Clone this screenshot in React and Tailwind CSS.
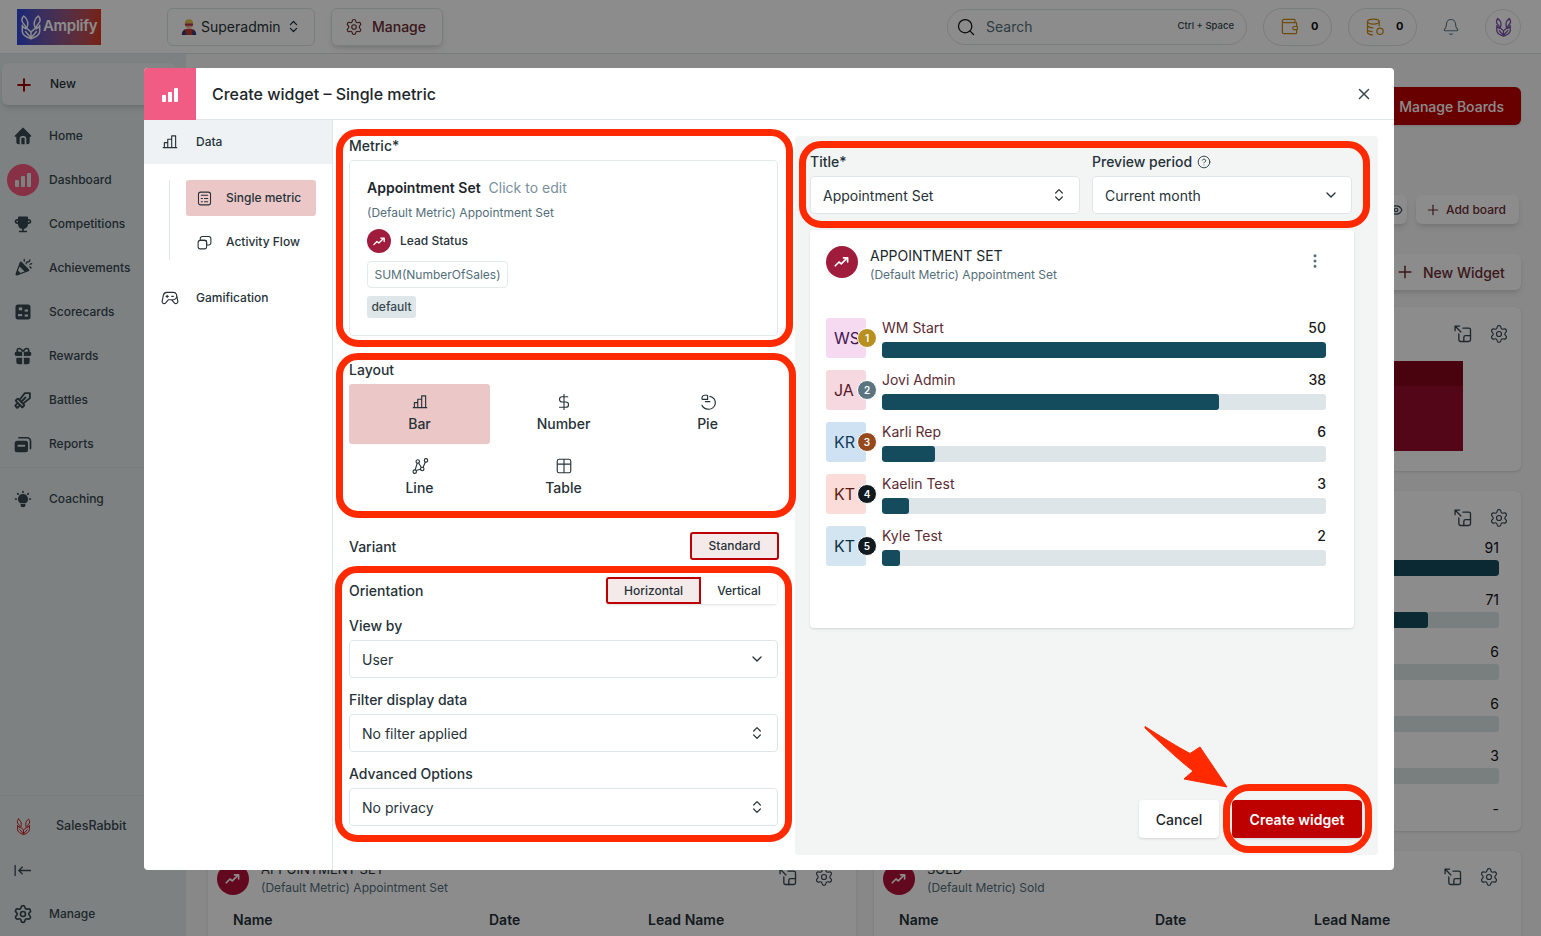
import React from "react";
import { Bell, Search, X, ChevronDown, ChevronsUpDown, Plus, DollarSign, Eye, EllipsisVertical, CircleHelp, Settings, Wallet } from "lucide-react";
import { TbHomeFilled, TbTrophyFilled, TbGiftFilled, TbBulbFilled, TbChevronsRight } from "react-icons/tb";
import { PiConfettiFill, PiChartBar, PiGameController, PiSwordBold } from "react-icons/pi";

const Rabbit = ({ className, stroke = "currentColor", w = 1.6 }) => (
  <svg viewBox="0 0 24 28" fill="none" stroke={stroke} strokeWidth={w} strokeLinejoin="round" strokeLinecap="round" className={className}>
    <path d="M4 2c-2.5 3-2.5 6 0 8.500 1.500 1.500 2.500 3 2.500 5.500-2-.5-3.500-2-4-4v7c0 3.500 4 6 9.500 8 5.500-2 9.500-4.500 9.500-8v-7c-.5 2-2 3.500-4 4 0-2.500 1-4 2.500-5.500 2.500-2.500 2.500-5.500 0-8.500-2.500 2-4.500 5-4.500 8.500 0 2 1 3 1 5l-4.500 4-4.500-4c0-2 1-3 1-5C8.500 7 6.500 4 4 2z" />
    <path d="M12 20v6M6 19l6 7 6-7" />
  </svg>
);

const Trend = ({ className }) => (
  <svg viewBox="0 0 24 24" fill="none" stroke="white" strokeWidth="2.2" strokeLinecap="round" strokeLinejoin="round" className={className}>
    <path d="M3 17l5-5 3 2.500 7-7" />
    <path d="M14 6.500h5.500V12" />
  </svg>
);

const Expand = ({ className }) => (
  <svg viewBox="0 0 24 24" fill="none" stroke="currentColor" strokeWidth="1.6" strokeLinecap="round" strokeLinejoin="round" className={className}>
    <path d="M2.500 2.500l7 7M2.500 2.500v5.500M2.500 2.500h5.500" />
    <path d="M12 5h7a2 2 0 012 2v12a2 2 0 01-2 2H9a2 2 0 01-2-2v-7" />
    <path d="M13 21v-5a2 2 0 012-2h6" />
  </svg>
);

const Scorecard = ({ className }) => (
  <svg viewBox="0 0 24 24" className={className}>
    <rect x="3" y="3" width="18" height="18" rx="3" fill="currentColor" />
    <rect x="7" y="6.500" width="4" height="3.500" fill="#e4ebed" />
    <rect x="14" y="9" width="4" height="2.500" fill="#e4ebed" />
    <rect x="6" y="14.500" width="5" height="2.500" fill="#e4ebed" />
    <rect x="14" y="15" width="4" height="2.500" fill="#e4ebed" />
  </svg>
);

const ReportsIcon = ({ className }) => (
  <svg viewBox="0 0 24 24" fill="none" className={className}>
    <rect x="2" y="8" width="16" height="14" rx="3" fill="currentColor" />
    <rect x="5.500" y="13" width="9" height="2.200" fill="#e4ebed" />
    <path d="M7 4.500h10a4 4 0 014 4v9" stroke="currentColor" strokeWidth="2" strokeLinecap="round" />
  </svg>
);

const SingleIcon = ({ className }) => (
  <svg viewBox="0 0 24 24" fill="none" stroke="currentColor" strokeWidth="1.5" strokeLinecap="round" className={className}>
    <rect x="3.500" y="3" width="17" height="18" rx="3" />
    <path d="M7.500 7.500h9M7.500 12h1.500M12 12h4.500M7.500 16.500h1.500M12 16.500h4.500" />
  </svg>
);

const FlowIcon = ({ className }) => (
  <svg viewBox="0 0 24 24" fill="none" stroke="currentColor" strokeWidth="1.5" strokeLinejoin="round" className={className}>
    <path d="M9 3.500h9a3 3 0 013 3v6a3 3 0 01-3 3h-3V11a2 2 0 00-2-2H6V6.500a3 3 0 013-3z" />
    <rect x="3" y="9" width="12" height="12" rx="3" />
  </svg>
);

const PieIcon = ({ className }) => (
  <svg viewBox="0 0 24 24" fill="none" stroke="currentColor" strokeWidth="1.5" strokeLinejoin="round" strokeLinecap="round" className={className}>
    <path d="M8 3h2.500a1 1 0 011 1v4.500H5a1 1 0 01-1-1V6.500A3.500 3.500 0 018 3z" />
    <path d="M14.500 4.500A8.500 8.500 0 0112 21.500c-3.500 0-6.500-2-8-5M14.500 11.500H8.500v0" />
  </svg>
);

const LineIcon = ({ className }) => (
  <svg viewBox="0 0 24 24" fill="none" stroke="currentColor" strokeWidth="1.5" className={className}>
    <circle cx="5" cy="19.500" r="2.300" />
    <circle cx="9" cy="6" r="2.300" />
    <circle cx="15" cy="16" r="2.300" />
    <circle cx="20" cy="4.500" r="2.300" />
    <path d="M5.500 17.200L8.400 8.200M10.200 8l3.600 6M16 14l3.200-7.300" />
    <path d="M7 18l6.500-2" />
  </svg>
);

const TableIcon = ({ className }) => (
  <svg viewBox="0 0 24 24" fill="none" stroke="currentColor" strokeWidth="1.5" className={className}>
    <rect x="3" y="3" width="18" height="18" rx="2.500" />
    <path d="M3 9.500h18M12 3v18" />
  </svg>
);

const Coins = ({ className }) => (
  <svg viewBox="0 0 24 24" fill="none" stroke="currentColor" strokeWidth="1.5" className={className}>
    <ellipse cx="10" cy="5.500" rx="7" ry="3" />
    <path d="M3 5.500v13c0 1.500 3 3 6.500 3M17 5.500V11M3 10c0 1.500 3 3 7 3M3 15c0 1.500 3 2.500 6 2.500" />
    <circle cx="18" cy="17" r="3.800" />
  </svg>
);

const Hero = () => (
  <svg viewBox="0 0 20 20" className="w-[18px] h-[18px]">
    <path d="M2 19c0-5 3.500-7 8-7s8 2 8 7z" fill="#c0392b" />
    <path d="M2 19c0-3 1.500-5.500 3.500-6.500L7 19zM18 19c0-3-1.500-5.500-3.500-6.500L13 19z" fill="#2f3b7d" />
    <circle cx="10" cy="7" r="4.500" fill="#e8b98d" />
    <path d="M5.300 7c0-4 2-5.500 4.700-5.500S14.700 3 14.700 7c-1.500-2-7.900-2-9.400 0z" fill="#e5c14a" />
    <rect x="5.500" y="6" width="9" height="2.500" rx="1" fill="#b8324a" />
  </svg>
);

const RED = "border-[#ff2a00]";

const navItems = [
  ["Home", TbHomeFilled],
  ["Dashboard", null],
  ["Competitions", TbTrophyFilled],
  ["Achievements", PiConfettiFill],
  ["Scorecards", Scorecard],
  ["Rewards", TbGiftFilled],
  ["Battles", PiSwordBold],
  ["Reports", ReportsIcon],
];

function SideItem({ label, Icon }) {
  return (
    <div className="h-[44px] flex items-center text-[12px] font-medium text-[#37474f]">
      <div className="w-[49px] flex justify-center pl-[-3px] shrink-0">
        {Icon ? (
          <Icon className="w-[20px] h-[20px] mr-[3px] text-[#37474f]" />
        ) : (
          <div className="w-[32px] h-[32px] rounded-full bg-[#f8587f] flex items-end justify-center gap-[2px] pb-[9px] mr-[3px]">
            <span className="w-[4px] h-[7px] bg-[#e4ebed] rounded-[1px]" />
            <span className="w-[4px] h-[11px] bg-[#e4ebed] rounded-[1px]" />
            <span className="w-[4px] h-[14px] bg-[#e4ebed] rounded-[1px]" />
          </div>
        )}
      </div>
      <span>{label}</span>
    </div>
  );
}

function Header() {
  return (
    <header className="h-[54px] bg-white border-b border-[#dbe3e6] flex items-center pl-[17px] pr-[20px] shrink-0">
      <div className="w-[84px] h-[36px] bg-gradient-to-r from-[#2f46d8] to-[#d83a20] flex items-center pl-[3px] gap-[1px]">
        <Rabbit className="w-[22px] h-[28px] text-white" />
        <span className="text-[15px] font-semibold text-white tracking-[-0.3px]">Amplify</span>
      </div>
      <button className="ml-[66px] w-[148px] h-[38px] border border-[#dbe3e6] rounded-md flex items-center pl-[12px] gap-[3px] text-[14px] text-[#263238]">
        <Hero />
        <span>Superadmin</span>
        <ChevronsUpDown className="w-[15px] h-[15px] ml-[2px]" />
      </button>
      <button className="ml-[16px] w-[112px] h-[38px] border border-[#dbe3e6] rounded-md flex items-center pl-[13px] gap-[9px] text-[14px] font-medium text-[#6b2c33] shadow-md">
        <Settings className="w-[18px] h-[18px]" strokeWidth={1.5} />
        <span>Manage</span>
      </button>
      <div className="ml-auto w-[300px] h-[36px] border border-[#dbe3e6] rounded-full flex items-center pl-[8px] pr-[12px] text-[#546e7a]">
        <Search className="w-[20px] h-[20px] text-[#111]" strokeWidth={1.5} />
        <span className="ml-[10px] text-[14px]">Search</span>
        <span className="ml-auto text-[9.500px] font-medium text-[#37474f]">Ctrl + Space</span>
      </div>
      <div className="ml-[16px] w-[69px] h-[38px] border border-[#dbe3e6] rounded-full flex items-center pl-[16px] gap-[12px]">
        <Wallet className="w-[19px] h-[19px] text-[#c98a1a]" strokeWidth={1.5} />
        <span className="text-[11px] font-bold text-[#111]">0</span>
      </div>
      <div className="ml-[16px] w-[69px] h-[38px] border border-[#dbe3e6] rounded-full flex items-center pl-[16px] gap-[11px]">
        <Coins className="w-[20px] h-[20px] text-[#c98a1a]" />
        <span className="text-[11px] font-bold text-[#111]">0</span>
      </div>
      <Bell className="ml-[25px] w-[18px] h-[18px] text-[#607d8b]" strokeWidth={1.5} />
      <div className="ml-[25px] w-[36px] h-[36px] border border-[#dbe3e6] rounded-full flex items-center justify-center">
        <Rabbit className="w-[17px] h-[22px]" stroke="#7a4fa8" w={1.8} />
      </div>
    </header>
  );
}

function Sidebar() {
  return (
    <aside className="w-[185px] bg-[#e4ebed] flex flex-col shrink-0">
      <div className="pt-[9px] pl-[2px] pr-[9px]">
        <button className="w-full h-[42px] bg-[#eef2f4] rounded-md shadow-md flex items-center text-[12px] font-medium text-[#263238]">
          <span className="relative w-[44px] h-[18px] block">
            <Plus className="absolute left-[12px] top-0 w-[20px] h-[20px] text-[#a00000]" strokeWidth={2.4} />
          </span>
          <span className="ml-[4px]">New</span>
        </button>
      </div>
      <nav className="mt-[9px] border-b border-[#dbe3e6] pb-[1px]">
        {navItems.map(([l, I]) => (
          <SideItem key={l} label={l} Icon={I} />
        ))}
      </nav>
      <div className="mt-[9px]">
        <SideItem label="Coaching" Icon={TbBulbFilled} />
      </div>
      <div className="mt-auto border-t border-[#dbe3e6] pt-[8px] pb-[0px]">
        <div className="h-[44px] flex items-center text-[12.500px] font-medium text-[#37474f]">
          <div className="w-[56px] flex justify-center pr-[10px]">
            <Rabbit className="w-[15px] h-[19px]" stroke="#c81e1e" w={1.6} />
          </div>
          <span>SalesRabbit</span>
        </div>
        <div className="h-[44px] flex items-center pl-[14px] text-[#37474f] text-[16px]">
          <svg viewBox="0 0 20 14" className="w-[19px] h-[13px]" fill="none" stroke="currentColor" strokeWidth="1.400">
            <path d="M1 1v12M18 7H5M9 3L5 7l4 4" />
          </svg>
        </div>
        <SideItem label="Manage" Icon={Settings} />
      </div>
    </aside>
  );
}

function CardIcons() {
  return (
    <div className="flex items-center gap-[16px] text-[#37474f]">
      <Expand className="w-[20px] h-[20px]" />
      <Settings className="w-[20px] h-[20px]" strokeWidth={1.4} />
    </div>
  );
}

function BottomCard({ names }) {
  return (
    <div className="bg-white rounded-md shadow h-[110px] pl-[9px] pr-[22px] pt-[12px]">
      <div className="flex">
        <div className="w-[32px] h-[32px] rounded-full bg-[#b5123a] flex items-center justify-center">
          <Trend className="w-[18px] h-[18px]" />
        </div>
        <div className="ml-[12px] flex-1 text-[12px] leading-[18px]">
          <div className="text-[13px] text-[#263238] -mt-[3px]">{names[3]}</div>
          <div className="text-[#546e7a] mt-[1px]">(Default Metric) {names[4]}</div>
        </div>
        <div className="mt-[4px]"><CardIcons /></div>
      </div>
      <div className="relative h-[20px] mt-[12px] text-[14px] font-semibold text-[#263238] flex pl-[16px]">
        <span className="w-[256px]">{names[0]}</span>
        <span className="w-[159px]">{names[1]}</span>
        <span>{names[2]}</span>
      </div>
    </div>
  );
}

function Background() {
  const vals = [["91", 100, "bg-[#144c5e]"], ["71", 78, "bg-[#144c5e]"], ["6", 0, ""], ["6", 0, ""], ["3", 0, ""]];
  return (
    <main className="flex-1 min-w-0 border-l border-[#e4ebed] bg-[#f7f7f7] pl-[22px] pr-[20px] flex flex-col">
      <div className="flex justify-end mt-[33px]">
        <button className="w-[150px] h-[38px] bg-[#bd0000] rounded-md text-[14px] font-medium text-white shadow text-right pr-[17px]">Manage Boards</button>
      </div>
      <div className="flex justify-end gap-[9px] mt-[70px] pr-[2px]">
        <button className="w-[40px] h-[29px] bg-white rounded-md shadow-md flex items-center justify-end pr-[4px] text-[#37474f]"><Eye className="w-[14px] h-[14px]" /></button>
        <button className="w-[103px] h-[29px] bg-white rounded-md shadow-md flex items-center pl-[9px] gap-[5px] text-[12px] font-medium text-[#6b2c33]">
          <Plus className="w-[16px] h-[16px]" strokeWidth={1.8} />Add board
        </button>
      </div>
      <div className="flex justify-end mt-[30px]">
        <button className="w-[140px] h-[36px] bg-white rounded-md shadow-md flex items-center pl-[14px] gap-[8px] text-[14px] font-medium text-[#6b2c33]">
          <Plus className="w-[20px] h-[20px]" strokeWidth={1.8} />New Widget
        </button>
      </div>
      <div className="grid grid-cols-[648px_647px] gap-x-[18px] gap-y-[20px] mt-[17px]">
        <div className="h-[164px] bg-white rounded-md shadow" />
        <div className="h-[164px] bg-white rounded-md shadow pr-[12px]">
          <div className="flex justify-end pt-[17px]"><CardIcons /></div>
          <div className="mt-[17px] ml-[240px] mr-[46px] h-[90px] bg-[#990b2f]">
            <div className="h-[25px] bg-[#83071d]" />
          </div>
        </div>
        <div className="h-[340px] bg-white rounded-md shadow" />
        <div className="h-[340px] bg-white rounded-md shadow pr-[12px]">
          <div className="flex justify-end pt-[17px]"><CardIcons /></div>
          <div className="mt-[10px] ml-[300px] mr-[10px]">
            {vals.map(([v, w, c], i) => (
              <div key={i} className="h-[52px] pt-[0px]">
                <div className="h-[20px] text-right text-[14px] text-[#111] leading-[20px]">{v}</div>
                <div className="h-[16px] mt-[2px] bg-[#dde5e8] rounded-[3px] overflow-hidden">
                  {w > 0 && <div className={`h-full ${c} rounded-[3px]`} style={{ width: w + "%" }} />}
                </div>
              </div>
            ))}
            <div className="text-right text-[14px] text-[#111]">-</div>
          </div>
        </div>
        <BottomCard names={["Name", "Date", "Lead Name", "APPOINTMENT SET", "Appointment Set"]} />
        <BottomCard names={["Name", "Date", "Lead Name", "SOLD", "Sold"]} />
      </div>
    </main>
  );
}

function Select({ value, kind, className = "" }) {
  return (
    <div className={`h-[38px] bg-white border border-[#dfe6e9] rounded-[4px] flex items-center pl-[12px] pr-[12px] text-[14px] text-[#263238] ${className}`}>
      <span>{value}</span>
      {kind === "down" ? (
        <ChevronDown className="ml-auto w-[16px] h-[16px] text-[#263238]" strokeWidth={2} />
      ) : (
        <ChevronsUpDown className="ml-auto w-[16px] h-[16px] text-[#263238]" strokeWidth={1.8} />
      )}
    </div>
  );
}

function LayoutCell({ icon, label, active }) {
  return (
    <div className={`h-[60px] rounded-[3px] flex flex-col items-center pt-[9px] text-[14px] font-medium text-[#263238] ${active ? "bg-[#ebc7c7]" : ""}`}>
      {icon}
      <span className="mt-[3px] leading-[20px]">{label}</span>
    </div>
  );
}

function Row({ initials, avatar, text, rank, badge, name, value, pct }) {
  return (
    <div className="flex gap-[16px] h-[40px]">
      <div className={`relative w-[40px] h-[40px] rounded-[3px] ${avatar} ${text} flex items-center pl-[8px] text-[16px]`}>
        {initials}
        <span className={`absolute left-[31px] top-[10px] w-[20px] h-[20px] rounded-full border border-white ${badge} text-white text-[10px] font-semibold flex items-center justify-center`}>{rank}</span>
      </div>
      <div className="w-[444px]">
        <div className="h-[24px] flex justify-between text-[14px] leading-[20px]">
          <span className="text-[#5c2b33]">{name}</span>
          <span className="text-[#1a1a1a] font-medium">{value}</span>
        </div>
        <div className="h-[16px] bg-[#dde5e8] rounded-[3px] overflow-hidden">
          <div className="h-full bg-[#144c5e] rounded-[3px]" style={{ width: pct + "%" }} />
        </div>
      </div>
    </div>
  );
}

function Modal() {
  const rows = [
    { initials: "WS", avatar: "bg-[#f5daf2]", text: "text-[#45154f]", rank: 1, badge: "bg-[#b8901f]", name: "WM Start", value: "50", pct: 100 },
    { initials: "JA", avatar: "bg-[#f6d8e0]", text: "text-[#57182b]", rank: 2, badge: "bg-[#5b7580]", name: "Jovi Admin", value: "38", pct: 76 },
    { initials: "KR", avatar: "bg-[#cfe2f3]", text: "text-[#123a5a]", rank: 3, badge: "bg-[#964a1c]", name: "Karli Rep", value: "6", pct: 12 },
    { initials: "KT", avatar: "bg-[#fbdcd8]", text: "text-[#5a1a12]", rank: 4, badge: "bg-[#111a1f]", name: "Kaelin Test", value: "3", pct: 6 },
    { initials: "KT", avatar: "bg-[#d2e5f0]", text: "text-[#0f3040]", rank: 5, badge: "bg-[#111a1f]", name: "Kyle Test", value: "2", pct: 4 },
  ];
  return (
    <div className="absolute left-[144px] top-[68px] w-[1250px] h-[802px] bg-white rounded-[4px] flex flex-col overflow-hidden">
      <div className="h-[52px] border-b border-[#dfe6e9] flex items-center shrink-0">
        <div className="w-[52px] h-[52px] bg-[#f05c84] flex items-end justify-center gap-[2px] pb-[18px]">
          <span className="w-[4px] h-[7px] bg-white rounded-[1px]" />
          <span className="w-[4px] h-[10px] bg-white rounded-[1px]" />
          <span className="w-[4px] h-[14px] bg-white rounded-[1px]" />
        </div>
        <div className="ml-[16px] text-[16px] font-medium text-[#1c262b]">Create widget – Single metric</div>
        <X className="ml-auto mr-[21px] w-[18px] h-[18px] text-[#37474f]" strokeWidth={2} />
      </div>
      <div className="flex flex-1 min-h-0">
        <div className="w-[189px] border-r border-[#dfe6e9] shrink-0 text-[12px] font-medium text-[#263238]">
          <div className="h-[44px] bg-[#eef2f4] flex items-center pl-[17px] gap-[17px]">
            <PiChartBar className="w-[18px] h-[18px]" />
            <span>Data</span>
          </div>
          <div className="ml-[25px] mt-[16px] border-l border-[#dfe6e9] pl-[16px] w-[147px] flex flex-col gap-[8px]">
            <div className="h-[36px] w-[130px] bg-[#ebc7c7] rounded-[3px] flex items-center pl-[10px] gap-[13px]">
              <SingleIcon className="w-[17px] h-[17px]" />
              <span>Single metric</span>
            </div>
            <div className="h-[36px] flex items-center pl-[10px] gap-[13px]">
              <FlowIcon className="w-[17px] h-[17px]" />
              <span>Activity Flow</span>
            </div>
          </div>
          <div className="h-[44px] mt-[16px] flex items-center pl-[17px] gap-[17px]">
            <PiGameController className="w-[18px] h-[18px]" />
            <span>Gamification</span>
          </div>
        </div>

        <div className="w-[462px] shrink-0 px-[16px] pt-[16px] text-[14px] text-[#263238] font-medium">
          <div className="h-[20px] leading-[20px]">Metric*</div>
          <div className="mt-[4px] h-[176px] w-[429px] border border-[#e4eaec] rounded-[4px] pl-[17px] pt-[16px]">
            <div className="flex items-center gap-[8px] h-[20px]">
              <span className="font-semibold text-[#1c262b]">Appointment Set</span>
              <span className="font-normal text-[#78909c]">Click to edit</span>
            </div>
            <div className="mt-[7px] text-[12px] font-normal text-[#546e7a] leading-[18px]">(Default Metric) Appointment Set</div>
            <div className="mt-[7px] flex items-center gap-[9px] text-[12px]">
              <div className="w-[24px] h-[24px] rounded-full bg-[#a01c3c] flex items-center justify-center"><Trend className="w-[15px] h-[15px]" /></div>
              <span>Lead Status</span>
            </div>
            <div className="mt-[8px] w-[141px] h-[27px] border border-[#e4eaec] rounded-[4px] flex items-center justify-center text-[12px] font-normal text-[#546e7a]">SUM(NumberOfSales)</div>
            <div className="mt-[8px] w-[49px] h-[22px] bg-[#dfe6e9] rounded-[3px] flex items-center justify-center text-[12px] text-[#37474f]">default</div>
          </div>

          <div className="h-[20px] leading-[20px] mt-[24px]">Layout</div>
          <div className="mt-[4px] w-[429px] grid grid-cols-3 gap-x-[3px] gap-y-[4px]">
            <LayoutCell active label="Bar" icon={<PiChartBar className="w-[18px] h-[18px]" />} />
            <LayoutCell label="Number" icon={<DollarSign className="w-[18px] h-[18px]" strokeWidth={1.5} />} />
            <LayoutCell label="Pie" icon={<PieIcon className="w-[18px] h-[18px]" />} />
            <LayoutCell label="Line" icon={<LineIcon className="w-[18px] h-[18px]" />} />
            <LayoutCell label="Table" icon={<TableIcon className="w-[18px] h-[18px]" />} />
          </div>

          <div className="mt-[24px] h-[28px] flex items-center justify-between w-[430px]">
            <span>Variant</span>
            <span className="w-[89px] h-[28px] bg-[#f5eaea] border-2 border-[#bd0000] rounded-[3px] flex items-center justify-center text-[12px]">Standard</span>
          </div>

          <div className="mt-[17px] h-[27px] flex items-center justify-between w-[428px]">
            <span>Orientation</span>
            <div className="flex text-[12px] shadow rounded-[3px] h-[27px]">
              <span className="w-[95px] bg-[#f5eaea] border-2 border-[#bd0000] rounded-l-[3px] flex items-center justify-center">Horizontal</span>
              <span className="w-[76px] bg-white flex items-center justify-center">Vertical</span>
            </div>
          </div>

          <div className="mt-[12px] h-[20px] leading-[20px]">View by</div>
          <Select value="User" kind="down" className="mt-[4px] w-[429px] font-normal" />
          <div className="mt-[12px] h-[20px] leading-[20px]">Filter display data</div>
          <Select value="No filter applied" className="mt-[4px] w-[429px] font-normal" />
          <div className="mt-[12px] h-[20px] leading-[20px]">Advanced Options</div>
          <Select value="No privacy" className="mt-[4px] w-[429px] font-normal" />
        </div>

        <div className="w-[583px] shrink-0 mt-[16px] mb-[15px] bg-[#f3f5f5] rounded-[4px] pl-[15px] pr-[16px] pt-[16px] pb-[17px] flex flex-col">
          <div className="flex gap-[12px] text-[14px] text-[#263238] font-medium">
            <div className="w-[270px]">
              <div className="h-[20px] leading-[20px]">Title*</div>
              <Select value="Appointment Set" className="mt-[4px] font-normal" />
            </div>
            <div className="w-[260px]">
              <div className="h-[20px] leading-[20px] flex items-center gap-[5px]">Preview period <CircleHelp className="w-[14px] h-[14px]" strokeWidth={1.5} /></div>
              <Select value="Current month" kind="down" className="mt-[4px] font-normal" />
            </div>
          </div>
          <div className="mt-[16px] w-[544px] h-[398px] bg-white rounded-[4px] shadow pl-[16px] pt-[16px]">
            <div className="flex">
              <div className="w-[32px] h-[32px] rounded-full bg-[#a01c3c] flex items-center justify-center"><Trend className="w-[18px] h-[18px]" /></div>
              <div className="ml-[12px]">
                <div className="text-[14px] leading-[20px] text-[#1c262b]">APPOINTMENT SET</div>
                <div className="text-[12px] leading-[18px] text-[#546e7a]">(Default Metric) Appointment Set</div>
              </div>
              <EllipsisVertical className="ml-auto mr-[30px] mt-[6px] w-[18px] h-[18px] text-[#546e7a]" />
            </div>
            <div className="mt-[34px] flex flex-col gap-[12px]">
              {rows.map((r) => (
                <Row key={r.name} {...r} />
              ))}
            </div>
          </div>
          <div className="mt-auto flex justify-end gap-[13px]">
            <button className="w-[80px] h-[38px] bg-white rounded-[4px] shadow text-[14px] font-medium text-[#1c262b]">Cancel</button>
            <button className="w-[130px] h-[38px] bg-[#bd0000] rounded-[4px] shadow text-[14px] font-semibold text-white">Create widget</button>
          </div>
        </div>
      </div>
    </div>
  );
}

function Annotations() {
  return (
    <>
      <div className={`absolute left-[336px] top-[129px] w-[457px] h-[218px] border-[7px] ${RED} rounded-[22px]`} />
      <div className={`absolute left-[336px] top-[353px] w-[460px] h-[165px] border-[7px] ${RED} rounded-[22px]`} />
      <div className={`absolute left-[335px] top-[566px] w-[457px] h-[276px] border-[7px] ${RED} rounded-[22px]`} />
      <div className={`absolute left-[799px] top-[141px] w-[571px] h-[87px] border-[7px] ${RED} rounded-[22px]`} />
      <div className={`absolute left-[1223px] top-[784px] w-[149px] h-[69px] border-[7px] ${RED} rounded-[26px]`} />
      <svg className="absolute left-[1140px] top-[720px] w-[95px] h-[72px]" viewBox="0 0 95 72">
        <path d="M5 6.500C20 16 36 26 50 33.500L60 27 87 67 44 59 53 51C35 37 18 20 5 8z" fill="#ff2a00" stroke="#ff2a00" strokeWidth="1" strokeLinejoin="round" />
      </svg>
    </>
  );
}

export default function App() {
  return (
    <div className="relative w-[1541px] h-[936px] overflow-hidden flex flex-col font-['Inter',sans-serif]">
      <Header />
      <div className="flex flex-1 min-h-0">
        <Sidebar />
        <Background />
      </div>
      <div className="absolute inset-0 bg-black/45" />
      <Modal />
      <Annotations />
    </div>
  );
}
